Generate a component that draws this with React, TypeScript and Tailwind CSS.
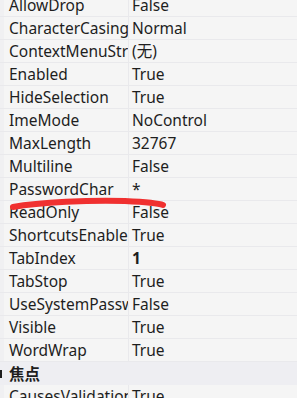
import React from "react";

type Row = { name: string; value: string; bold?: boolean };

const rows: Row[] = [
  { name: "AllowDrop", value: "False" },
  { name: "CharacterCasing", value: "Normal" },
  { name: "ContextMenuStrip", value: "(无)" },
  { name: "Enabled", value: "True" },
  { name: "HideSelection", value: "True" },
  { name: "ImeMode", value: "NoControl" },
  { name: "MaxLength", value: "32767" },
  { name: "Multiline", value: "False" },
  { name: "PasswordChar", value: "*" },
  { name: "ReadOnly", value: "False" },
  { name: "ShortcutsEnabled", value: "True" },
  { name: "TabIndex", value: "1", bold: true },
  { name: "TabStop", value: "True" },
  { name: "UseSystemPasswordChar", value: "False" },
  { name: "Visible", value: "True" },
  { name: "WordWrap", value: "True" },
];

function PropRow({ row }: { row: Row }) {
  return (
    <div className="flex h-[23px] border-b border-[#e9e9ec]">
      <div className="w-[4px] shrink-0 bg-[#f0f0f2]" />
      <div className="w-[124px] shrink-0 overflow-hidden whitespace-nowrap pl-[5px] leading-[22px]">
        {row.name}
      </div>
      <div className="w-px shrink-0 bg-[#e9e9ec]" />
      <div className={"flex-1 whitespace-nowrap pl-[3px] leading-[22px] " + (row.bold ? "font-bold" : "")}>
        {row.value}
      </div>
    </div>
  );
}

export default function App() {
  return (
    <div
      className="relative h-[398px] w-[297px] overflow-hidden bg-[#f5f5f5] text-[15.5px] text-[#1e1e1e]"
      style={{ fontFamily: '"Noto Sans", "Noto Sans CJK SC", sans-serif' }}
    >
      <div className="-mt-[6px]">
        {rows.map((r) => (
          <PropRow key={r.name} row={r} />
        ))}
        <div className="flex h-[23px] items-center bg-[#eeeef2]">
          <div className="h-[8px] w-[2px] bg-[#1e1e1e]" />
          <div className="pl-[7px] font-bold leading-[22px]">焦点</div>
        </div>
        <PropRow row={{ name: "CausesValidation", value: "True" }} />
      </div>

      {/* red marker stroke under PasswordChar */}
      <svg className="absolute left-0 top-[196px]" width="180" height="16">
        <path
          d="M13 11 C 40 6, 90 4, 125 5 C 145 6, 158 7, 163 9"
          stroke="#f03030"
          strokeWidth="6"
          strokeLinecap="round"
          fill="none"
        />
      </svg>
    </div>
  );
}
